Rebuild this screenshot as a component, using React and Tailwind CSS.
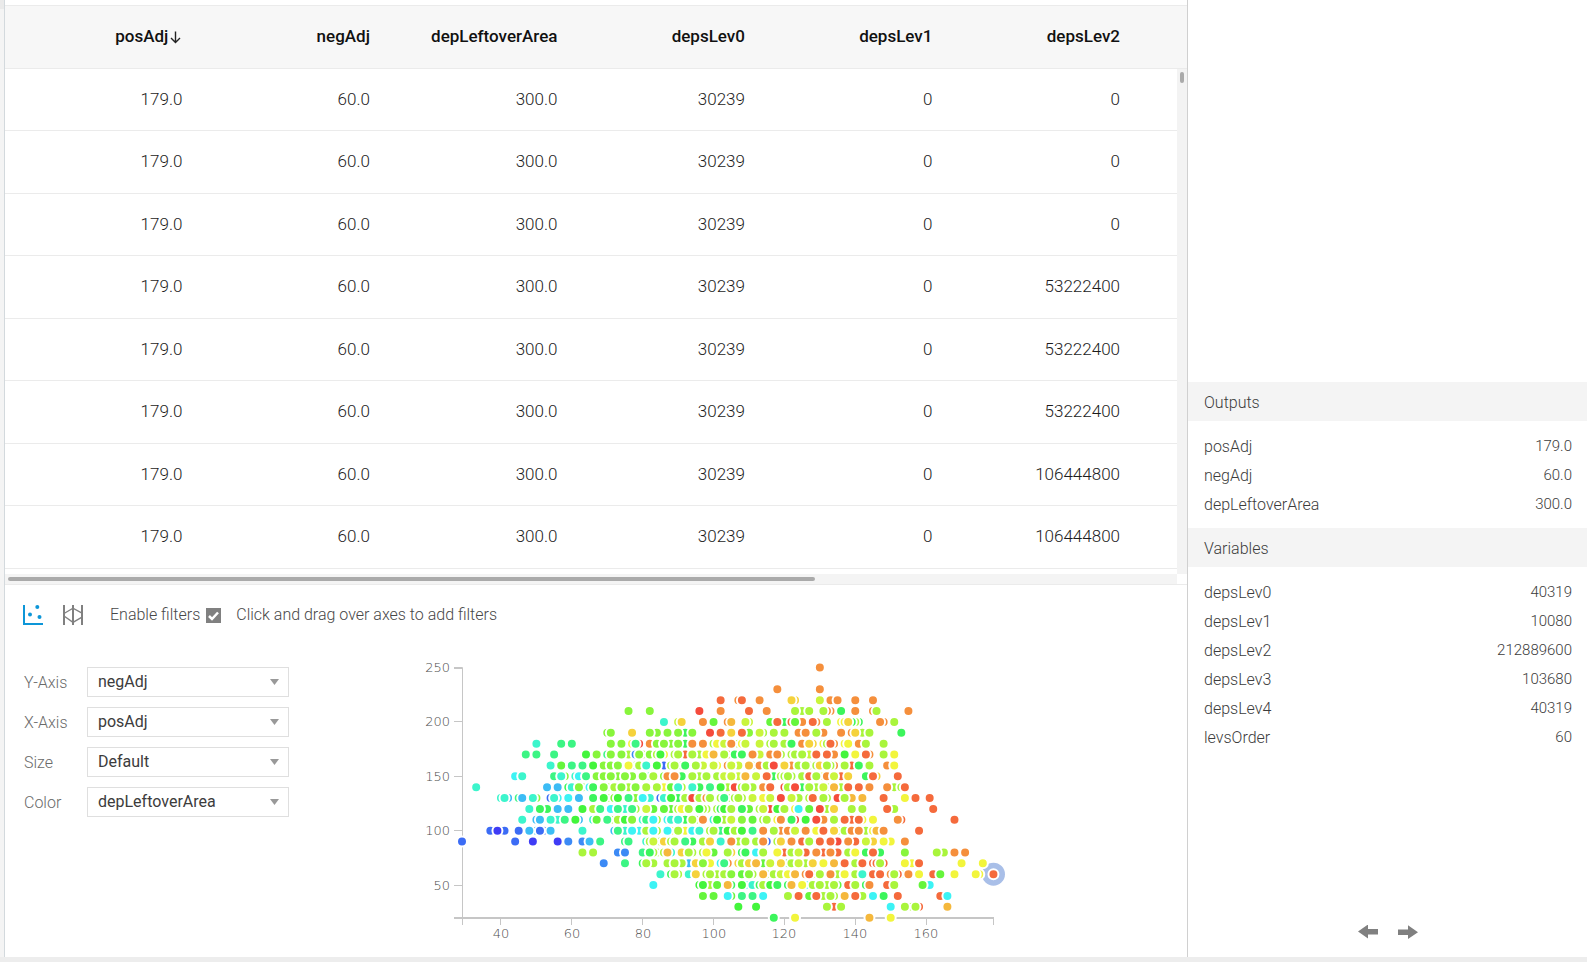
import React from "react";

const COLUMNS = ["posAdj", "negAdj", "depLeftoverArea", "depsLev0", "depsLev1", "depsLev2"];
const LAST_COLUMN = ["0", "0", "0", "53222400", "53222400", "53222400", "106444800", "106444800"];
const ROWS = LAST_COLUMN.map((v) => ["179.0", "60.0", "300.0", "30239", "0", v]);

const OUTPUTS = [
  ["posAdj", "179.0"],
  ["negAdj", "60.0"],
  ["depLeftoverArea", "300.0"],
];
const VARIABLES = [
  ["depsLev0", "40319"],
  ["depsLev1", "10080"],
  ["depsLev2", "212889600"],
  ["depsLev3", "103680"],
  ["depsLev4", "40319"],
  ["levsOrder", "60"],
];

const PALETTE = {
  n: "#3f3cf5", b: "#3c6cf5", k: "#3c8af5", s: "#3cbcf5", c: "#3cf3f5", t: "#3cf5cc", e: "#3cf584",
  g: "#3cf55c", f: "#43f53c", h: "#66f53c", l: "#88f53c", m: "#a9f53c", p: "#c9f53c", y: "#f2f53c",
  a: "#f5d23c", o: "#f5b83c", r: "#f58f3c", d: "#f56a3c", x: "#f54b3c",
};

// Points by negAdj value: posAdj followed by a colour key; upper case is drawn in front.
const POINTS = {
  250: "130R",
  230: "118R 130R",
  220: "102D 107r 108D 113R 122A 123a 130P 133r 135R 140R 145R",
  210: "76L 82L 96X 102R 110D 115R 123M 125m 127M 131M 133r 132r 136G 140R 145r 146M 155R",
  200: "86T 90p 91A 97R 100H 104r 105O 109P 110p 116h 118D 120g 122d 123H 125r 128D 129r 132M 136y 137y 138A 141g 140m 139g 147R 148r 151M",
  190: "70l 71L 77A 82L 84l 87L 90L 92g 94l 99X 102D 105A 108D 110l 113P 114m 117M 120M 124r 126R 129M 131r 136R 139r 140A 142m 144M 153G",
  180: "57E 50T 60E 71L 74L 77y 78E 79x 82r 84l 86L 88l 90L 92g 94R 97R 100m 101y 103P 105R 107m 108y 109P 113P 116m 117M 120M 122G 125r 127A 128a 131y 132m 133D 134r 137y 138Y 141r 143M 148M",
  170: "47E 50E 55E 64F 67L 70e 71L 74L 76m 78k 79L 80m 82l 84m 85F 86y 89m 90M 92d 94M 96m 98y 100O 103M 104r 106g 108G 111R 113p 116r 118R 119m 122m 123m 125M 127p 129D 132D 134r 137F 140Y 143D 144r 148M 151Y",
  160: "54T 57H 60E 63E 66F 69l 71L 73L 76Y 78l 79m 81t 84F 86b 88m 89M 91m 92g 95M 97p 100P 101y 104r 105P 107p 110O 111m 113r 115m 117X 120A 122r 124m 126M 127m 129m 130a 132M 134r 133m 137M 139d 141g 144M 149r 151Y",
  150: "44c 46T 55e 57T 58l 61t 62c 64E 67l 69L 71L 73l 75L 77l 80L 82t 83m 86l 87r 89R 91g 94M 96m 98M 101m 103P 105P 107p 109o 112P 115D 117g 119m 120m 121M 122m 125m 127d 129M 131y 132r 134P 136d 138a 143g 145D 146a 152D",
  140: "33T 53S 56S 59g 60t 62L 63l 65c 66G 69L 70m 72m 74L 76m 78L 81M 84M 86y 88h 90T 91m 94T 96g 99E 102F 104m 106x 108m 109M 111m 114r 116D 120x 121m 123X 125g 127M 129m 132m 131p 134O 136m 138D 141D 144R 149R 151m 153m 154D",
  130: "40t 41T 42s 45e 46S 49T 50l 54b 55T 56c 59C 62S 66G 69F 70m 72l 73F 76E 78l 80C 82t 85b 86t 88F 90g 92m 94x 96m 98r 99M 102m 103E 104m 106m 107M 108m 111P 114y 116P 119X 122P 124m 127m 128D 131M 132m 135x 137M 139o 142O 148D 154Y 157D 161D",
  120: "48T 51G 53g 56S 59S 63F 66m 68E 71c 73E 75t 77E 78m 81P 83h 86H 88h 90m 91y 93M 96F 98m 97m 101m 102g 103F 105M 108G 110h 113m 114P 116x 118f 120m 123y 124C 127H 130X 132m 134a 139M 142M 149D 151m 162D",
  110: "46T 50s 51S 54T 56t 58E 61F 62s 66t 67H 70E 71m 73m 75f 77L 80t 81E 83C 84m 87c 88t 90T 92g 94M 95m 97R 100t 101F 103m 105P 108L 111H 114m 115M 118y 119r 122G 123x 126F 129X 131r 134M 137D 139d 141D 142y 145Y 152R 153d 168D",
  100: "37B 39N 41b 45B 48S 50s 51B 52b 54s 63T 72s 73E 75t 77C 79c 81m 83C 84m 87C 88y 90M 92y 94c 96T 99m 100M 102e 104f 106m 108F 111E 114R 117M 119r 121r 123P 126R 129y 131D 134A 135m 137m 139r 141R 143m 145y 146o 148R 158D",
  90: "29B 44B 49N 56N 59K 63k 65S 68E 75e 76E 81t 82m 83P 85m 86a 88m 89M 92E 94g 97m 99A 102T 105R 107m 109M 112m 114R 115b 118m 119A 122R 125d 127M 130D 133D 135x 138R 140d 143P 145a 148Y 150y 154R",
  80: "63M 66M 73k 75K 80e 82G 84m 83m 86m 87O 88t 91a 93M 94m 97m 98Y 100h 104M 105a 108g 109g 112c 114M 118Y 120d 122m 124P 126d 129R 131d 133R 135d 138m 140Y 143g 145D 147g 154L 163M 165m 168R 171R",
  70: "69K 75E 80g 81M 83m 87m 89M 93s 91m 95a 97L 99y 102c 103E 104r 107a 108m 110a 112O 114h 116P 119A 121g 122m 124P 126m 128a 131Y 134O 137d 140m 142D 145d 146d 147M 148d 154Y 156y 158D 170Y 176Y",
  60: "85T 88g 89M 90m 93t 95A 98m 99M 101m 103m 105L 108h 110L 111m 114O 115m 117m 119p 121Y 123O 126r 127D 128y 130m 133R 135m 137y 140m 142T 145D 147D 150r 151M 153y 152d 155r 158Y 162d 164H 168Y 174Y 175y",
  50: "83C 96f 97F 101H 99m 104O 105g 108F 109c 111t 113g 114m 116f 118G 121g 122O 125Y 126c 128m 130M 132m 135h 134m 138d 140M 143g 144r 149d 151M 159H 161c",
  40: "97H 100H 104C 105h 108E 111E 114C 121M 124D 127h 129D 131m 133M 134m 137O 140D 142m 145C 148G 152D 164d 166C",
  30: "107F 112F 132M 134d 136M 150C 154M 156m 157M 158d 166O",
  20: "117G 123Y 144O 150Y",
};

const dots = Object.entries(POINTS)
  .flatMap(([y, row]) =>
    row.split(" ").map((token) => {
      const key = token.slice(-1);
      return { x: parseInt(token, 10), y: Number(y), front: key === key.toUpperCase(), fill: PALETTE[key.toLowerCase()] };
    })
  )
  .sort((a, b) => Number(a.front) - Number(b.front));

const px = (v) => 62 + (v - 29) * 3.543;
const py = (v) => 17.5 + (250 - v) * 1.088;

function ScatterPlot() {
  return (
    <svg width="620" height="290" viewBox="0 0 620 290" role="img" aria-label="negAdj by posAdj" className="shrink-0 font-['DejaVu_Sans'] text-[13px] font-extralight">
      <g stroke="#c6c6c6" fill="none">
        <path d="M54 17.5H62.5V268" />
        <path d="M54 18.5H62" />
        {[200, 150, 100, 50].map((v) => (
          <path key={v} d={`M54 ${Math.floor(py(v)) + 0.5}H62`} />
        ))}
        <path d="M54 268H594" strokeWidth="2" />
        {[29, 40, 60, 80, 100, 120, 140, 160, 179].map((v) => (
          <path key={v} d={`M${Math.floor(px(v)) + 0.5} 268V275`} />
        ))}
      </g>
      <g fill="#4d4d4d">
        {[250, 200, 150, 100, 50].map((v) => (
          <text key={v} x="50" y={Math.floor(py(v)) + 5} textAnchor="end">{v}</text>
        ))}
        {[40, 60, 80, 100, 120, 140, 160].map((v) => (
          <text key={v} x={Math.round(px(v))} y="288" textAnchor="middle">{v}</text>
        ))}
      </g>
      <circle cx={px(179)} cy={py(60)} r="11.500" fill="#a9bfe8" />
      <g stroke="#fff" strokeWidth="2">
        {dots.map((d, i) => (
          <circle key={i} cx={px(d.x)} cy={py(d.y)} r="5" fill={d.fill} />
        ))}
        <circle cx={px(179)} cy={py(60)} r="5" fill="#f56a3c" />
      </g>
    </svg>
  );
}

function AxisSelect({ id, label, value }) {
  return (
    <div className="flex h-[30px] items-center">
      <label htmlFor={id} className="w-[63px] pt-0.5 text-[16px] font-light text-[#6a6a6a]">{label}</label>
      <div className="grid w-[202px] items-center">
        <select id={id} defaultValue={value} className="col-start-1 row-start-1 h-[30px] w-full appearance-none border border-[#dfdfdf] bg-white pl-[10px] text-[16px] text-[#3c3c3c] outline-none">
          <option>{value}</option>
        </select>
        <svg width="9" height="6" viewBox="0 0 9 6" className="pointer-events-none col-start-1 row-start-1 mr-[10px] justify-self-end" fill="#999">
          <path d="M0 0H9L4.500 6Z" />
        </svg>
      </div>
    </div>
  );
}

function Section({ title, items }) {
  return (
    <section>
      <h2 className="flex h-[39px] items-center bg-[#f4f4f4] px-4 pt-0.5">{title}</h2>
      <dl className="pt-[11px] pb-[9px]">
        {items.map(([k, v]) => (
          <div key={k} className="flex h-[29px] items-center justify-between pr-[15px] pl-4">
            <dt>{k}</dt>
            <dd className="text-[15px]">{v}</dd>
          </div>
        ))}
      </dl>
    </section>
  );
}

export default function App() {
  return (
    <div className="flex min-h-screen flex-col bg-white font-['Roboto',sans-serif]">
      <div className="flex flex-1">
        <div className="w-1 shrink-0 bg-[#f4f4f4]">
          <div className="h-[9px] bg-[#eaeaea]" />
        </div>
        <main className="min-w-0 flex-1 border-l border-[#d3d9dd] pt-[5px]">
          <div className="flex">
            <div className="min-w-0 flex-1">
              <table className="w-full table-fixed border-separate border-spacing-0 text-right text-[17px] text-[#1c1c1c]">
                <thead>
                  <tr className="h-[64px] bg-[#f7f7f7]">
                    {COLUMNS.map((c, i) => (
                      <th key={c} scope="col" className="w-[16%] border-y border-[#ebebeb] pr-[57px] font-medium whitespace-nowrap text-[#111] first:w-[20%]">
                        <div className="flex items-center justify-end">
                          <span>{c}</span>
                          {i === 0 && (
                            <svg width="13" height="14" viewBox="0 0 13 14" fill="none" stroke="#222" strokeWidth="1.400" className="ml-px">
                              <path d="M6.500 1.500V12.500M2 8L6.500 12.500L11 8" />
                            </svg>
                          )}
                        </div>
                      </th>
                    ))}
                  </tr>
                </thead>
                <tbody className="font-light">
                  {ROWS.map((row, i) => (
                    <tr key={i} className="h-[62px] even:h-[63px]">
                      {row.map((v, j) => (
                        <td key={j} className="border-b border-[#ebebeb] p-0 pr-[57px]">{v}</td>
                      ))}
                    </tr>
                  ))}
                </tbody>
              </table>
              <div className="mt-[5px] h-[10px] bg-[#f4f4f4] px-[3px] py-[3px]">
                <div className="h-1 w-9/13 rounded-full bg-[#aaa]" />
              </div>
            </div>
            <div className="flex w-[10px] shrink-0 flex-col pb-[10px]">
              <div className="h-[64px] border-y border-[#ebebeb] bg-[#f7f7f7]" />
              <div className="flex-1 bg-[#f3f3f3] px-[3px] py-[3px]">
                <div className="h-[11px] rounded-full bg-[#aaa]" />
              </div>
            </div>
          </div>
          <div className="border-t border-[#ebebeb]">
            <div className="flex h-[60px] items-center pl-[18px] text-[16px] font-light text-[#484848]">
              <button type="button" aria-label="Scatter plot" className="mr-5">
                <svg width="20" height="20" viewBox="0 0 20 20" fill="#0d96d8">
                  <path d="M0 0H2V18H20V20H0Z" />
                  <circle cx="14.300" cy="2" r="2" />
                  <circle cx="7" cy="9.500" r="2" />
                  <circle cx="16.500" cy="12" r="2" />
                </svg>
              </button>
              <button type="button" aria-label="Parallel coordinates" className="mr-[27px]">
                <svg width="20" height="20" viewBox="0 0 20 20" fill="none" stroke="#808080">
                  <path d="M1 0V20M10 0V20M19 0V20" strokeWidth="2" />
                  <path d="M1 8.500L10 3.200L19 8.200M1 9.500L10 17.500L19 12.500M2 14.500L10 10" strokeWidth="0" />
                  <path d="M1 8.500L10 3.200L19 8.200M1 11L10 17.300L19 12.200" strokeWidth="1.400" />
                </svg>
              </button>
              <label htmlFor="filters" className="mr-[6px]">Enable filters</label>
              <span className="mr-[15px] grid place-items-center">
                <input id="filters" type="checkbox" defaultChecked className="peer col-start-1 row-start-1 size-[15px] appearance-none border border-[#808080] checked:bg-[#808080]" />
                <svg width="15" height="15" viewBox="0 0 15 15" fill="none" stroke="#fff" strokeWidth="2.500" className="pointer-events-none col-start-1 row-start-1 hidden peer-checked:block">
                  <path d="M3 8L6 11L12 4.500" />
                </svg>
              </span>
              <span>Click and drag over axes to add filters</span>
            </div>
            <div className="flex items-start pl-[19px]">
              <div className="mt-[22px] mr-[111px] flex flex-col gap-[10px]">
                <AxisSelect id="y-axis" label="Y-Axis" value="negAdj" />
                <AxisSelect id="x-axis" label="X-Axis" value="posAdj" />
                <AxisSelect id="size" label="Size" value="Default" />
                <AxisSelect id="color" label="Color" value="depLeftoverArea" />
              </div>
              <div className="mt-[5px]">
                <ScatterPlot />
              </div>
            </div>
          </div>
        </main>
        <aside className="flex w-[400px] shrink-0 flex-col border-l border-[#d0d0d0] pt-[382px] text-[16px] font-light text-[#3c3c3c]">
          <Section title="Outputs" items={OUTPUTS} />
          <Section title="Variables" items={VARIABLES} />
          <div className="mt-auto flex gap-5 pb-[18px] pl-[170px]">
            <button type="button" aria-label="Previous">
              <svg width="20" height="14" viewBox="0 0 20 14" fill="#808080">
                <path d="M0 6.500L10 -0.500V4H20V9.500H10V13.500Z" />
              </svg>
            </button>
            <button type="button" aria-label="Next">
              <svg width="20" height="14" viewBox="0 0 20 14" fill="#808080">
                <path d="M20 7.200L10 0.200V4.500H0V10H10V14Z" />
              </svg>
            </button>
          </div>
        </aside>
      </div>
      <div className="h-[5px] bg-[#ededed]" />
    </div>
  );
}
